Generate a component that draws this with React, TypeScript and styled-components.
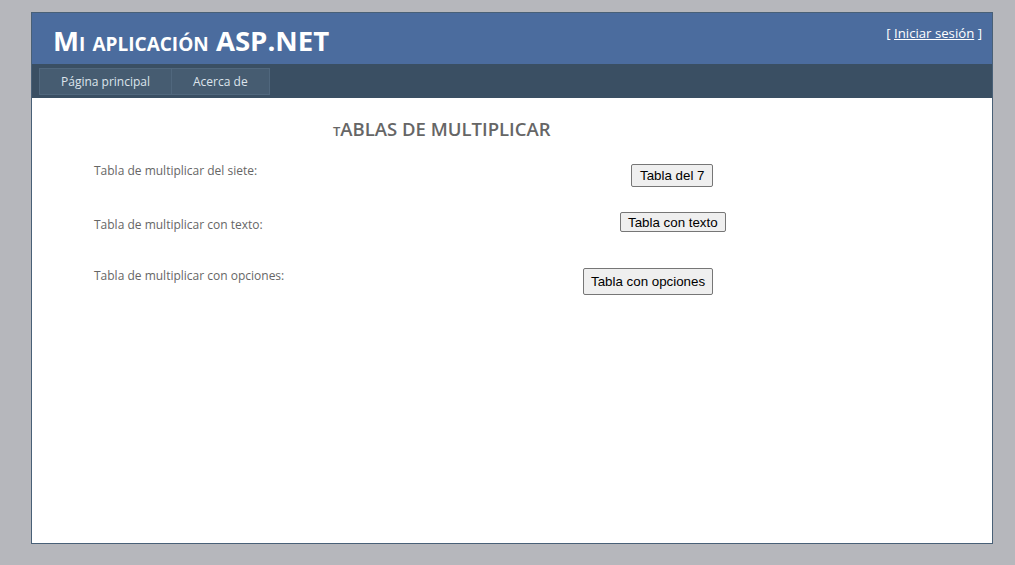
import React from "react";
import styled, { createGlobalStyle } from "styled-components";

const GlobalStyle = createGlobalStyle`
  html, body {
    margin: 0;
    padding: 0;
    background: #b6b7bc;
    font-family: "Open Sans", "Noto Sans", Arial, sans-serif;
    font-size: 12px;
    color: #696969;
  }
`;

const Page = styled.div`
  width: 960px;
  margin: 12px 0 0 31px;
  background: #fff;
  border: 1px solid #496077;
`;

const Header = styled.header`
  background: #4b6c9e;
`;

const TitleRow = styled.div`
  display: flex;
  justify-content: space-between;
  align-items: flex-start;
  height: 51px;
`;

const Title = styled.h1`
  margin: 0;
  padding: 8px 20px 0 21px;
  font-size: 27.6px;
  font-weight: 700;
  font-variant: small-caps;
  color: #fff;
`;

const Login = styled.div`
  padding: 11px 10px 0 0;
  font-size: 13.2px;
  color: #fff;
`;

const LoginLink = styled.a`
  color: #fff;
  text-decoration: underline;
`;

const MenuBar = styled.nav`
  display: flex;
  height: 34px;
  padding: 4px 0 0 8px;
  box-sizing: border-box;
  background: #3a4f63;
`;

const MenuItem = styled.a`
  display: flex;
  align-items: center;
  height: 27px;
  box-sizing: border-box;
  padding: 0 21px;
  background: #465c71;
  border: 1px solid #50677d;
  margin-left: -1px;
  color: #dde4ec;
  font-size: 12px;
  text-decoration: none;
`;

const Main = styled.main`
  min-height: 445px;
  box-sizing: border-box;
  padding: 18px 0 0 0;
`;

const Heading = styled.h2`
  margin: 0 0 14px 301px;
  font-size: 18.5px;
  font-weight: 600;
  font-variant: small-caps;
  color: #666;
`;

const Grid = styled.div`
  display: grid;
  grid-template-columns: 488px 1fr;
  padding: 6px 0 0 62px;
`;

const Label = styled.div<{ $height: number; $top: number }>`
  height: ${({ $height }) => $height}px;
  padding-top: ${({ $top }) => $top}px;
  box-sizing: border-box;
  font-size: 12px;
  color: #666;
`;

const Cell = styled.div<{ $height: number; $top: number; $left: number }>`
  height: ${({ $height }) => $height}px;
  padding: ${({ $top }) => $top}px 0 0 ${({ $left }) => $left}px;
  box-sizing: border-box;
`;

const Button = styled.button<{ $h: number; $px: number }>`
  height: ${({ $h }) => $h}px;
  padding: 0 ${({ $px }) => $px}px;
  font-family: Arial, "Liberation Sans", sans-serif;
  font-size: 13.33px;
  color: #000;
  background: #efefef;
  border: 1px solid #767676;
  border-radius: 2px;
`;

const rows = [
  { label: "Tabla de multiplicar del siete:", button: "Tabla del 7", h: 23, px: 8, top: 1, btnTop: 3, left: 49, height: 48 },
  { label: "Tabla de multiplicar con texto:", button: "Tabla con texto", h: 20, px: 7, top: 7, btnTop: 3, left: 38, height: 56 },
  { label: "Tabla de multiplicar con opciones:", button: "Tabla con opciones", h: 27, px: 7, top: 2, btnTop: 3, left: 1, height: 40 },
];

export default function App() {
  return (
    <>
      <GlobalStyle />
      <Page>
        <Header>
          <TitleRow>
            <Title>Mi aplicación ASP.NET</Title>
            <Login>
              [ <LoginLink href="#">Iniciar sesión</LoginLink> ]
            </Login>
          </TitleRow>
          <MenuBar>
            <MenuItem href="#">Página principal</MenuItem>
            <MenuItem href="#">Acerca de</MenuItem>
          </MenuBar>
        </Header>
        <Main>
          <Heading>tABLAS DE MULTIPLICAR</Heading>
          <Grid>
            {rows.map((r) => (
              <React.Fragment key={r.button}>
                <Label $height={r.height} $top={r.top}>{r.label}</Label>
                <Cell $height={r.height} $top={r.btnTop} $left={r.left}>
                  <Button $h={r.h} $px={r.px}>{r.button}</Button>
                </Cell>
              </React.Fragment>
            ))}
          </Grid>
        </Main>
      </Page>
    </>
  );
}
